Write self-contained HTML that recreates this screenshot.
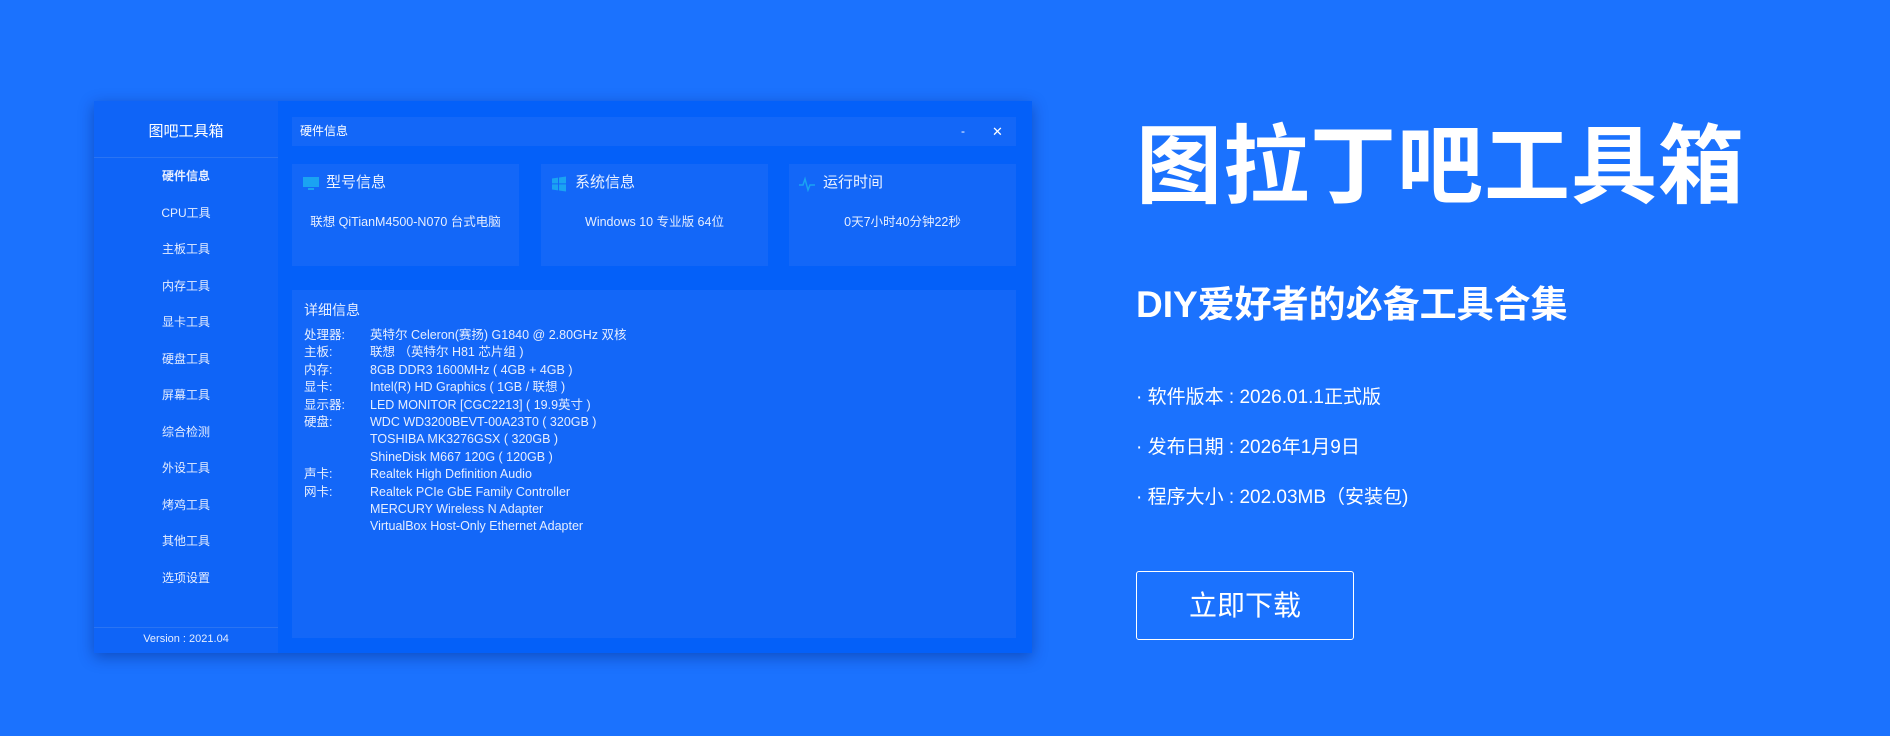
<!DOCTYPE html>
<html><head><meta charset="utf-8"><style>
*{margin:0;padding:0;box-sizing:border-box}
body{width:1890px;height:736px;overflow:hidden;background:#1b72fe;font-family:"Liberation Sans","Noto Sans CJK SC",sans-serif;color:#fff;position:relative}
.a{position:absolute}
.win{left:94px;top:101px;width:938px;height:552px;background:#0460f9;box-shadow:0 4px 14px rgba(0,30,120,.45)}
.side{left:0;top:0;width:184px;height:552px;background:#0f64f7}
.side .t{position:absolute;top:19px;width:184px;text-align:center;font-size:15px}
.side .ln{position:absolute;left:0;width:184px;height:1px;background:#2a74f3}
.menu{position:absolute;left:0;width:184px;text-align:center;font-size:12px;color:#e6eeff}
.bar{left:198px;top:16px;width:724px;height:29px;background:#1367f8;font-size:12px;line-height:29px;padding-left:8px}
.card{top:63px;width:227px;height:102px;background:#1367f8}
.card .h{position:absolute;left:34px;top:7px;font-size:15px;color:#eaf1ff}
.card .v{position:absolute;top:47px;width:100%;text-align:center;font-size:12.5px;color:#e6eeff}
.card svg{position:absolute;left:10px;top:12px}
.det{left:198px;top:189px;width:724px;height:348px;background:#1367f8;font-size:12.5px;color:#e6eeff}
.row{position:absolute;left:12px;height:17.4px;line-height:17.4px;white-space:nowrap}
.row b{font-weight:normal;display:inline-block;width:66px}
.r{left:1136px;white-space:nowrap}
</style></head><body>
<div class="a win">
 <div class="a side">
  <div class="t">图吧工具箱</div>
  <div class="ln" style="top:56px"></div>
  <div class="menu" style="top:66px;font-weight:bold">硬件信息</div>
  <div class="menu" style="top:103px">CPU工具</div>
  <div class="menu" style="top:139px">主板工具</div>
  <div class="menu" style="top:176px">内存工具</div>
  <div class="menu" style="top:212px">显卡工具</div>
  <div class="menu" style="top:249px">硬盘工具</div>
  <div class="menu" style="top:285px">屏幕工具</div>
  <div class="menu" style="top:322px">综合检测</div>
  <div class="menu" style="top:358px">外设工具</div>
  <div class="menu" style="top:395px">烤鸡工具</div>
  <div class="menu" style="top:431px">其他工具</div>
  <div class="menu" style="top:468px">选项设置</div>
  <div class="ln" style="top:526px"></div>
  <div class="menu" style="top:532px;font-size:11px">Version : 2021.04</div>
 </div>
 <div class="a bar">硬件信息<span class="a" style="left:669px;top:0">-</span><span class="a" style="left:700px;top:0;font-size:13px">✕</span></div>
 <div class="a card" style="left:198px">
  <svg width="18" height="16" viewBox="0 0 18 16"><rect x="1" y="1" width="16" height="10" fill="#1aa3f2"/><rect x="6" y="12" width="6" height="2" fill="#1aa3f2"/></svg>
  <div class="h">型号信息</div><div class="v">联想 QiTianM4500-N070 台式电脑</div></div>
 <div class="a card" style="left:447px">
  <svg width="16" height="16" viewBox="0 0 16 16" fill="#1aa3f2"><path d="M1 2.5 7 1.6V7.4H1zM8 1.5 15 .5V7.4H8zM1 8.4H7v6L1 13.5zM8 8.4h7V15.5l-7-1z"/></svg>
  <div class="h">系统信息</div><div class="v">Windows 10 专业版 64位</div></div>
 <div class="a card" style="left:695px">
  <svg width="16" height="16" viewBox="0 0 16 16"><path d="M0 9h4l2-6 3 11 2-5h5" fill="none" stroke="#1aa3f2" stroke-width="1.5"/></svg>
  <div class="h">运行时间</div><div class="v">0天7小时40分钟22秒</div></div>
 <div class="a det">
  <div class="a" style="left:12px;top:10px;font-size:14px">详细信息</div>
  <div class="row" style="top:37px"><b>处理器:</b>英特尔 Celeron(赛扬) G1840 @ 2.80GHz 双核</div>
  <div class="row" style="top:54.4px"><b>主板:</b>联想 （英特尔 H81 芯片组 )</div>
  <div class="row" style="top:71.8px"><b>内存:</b>8GB DDR3 1600MHz ( 4GB + 4GB )</div>
  <div class="row" style="top:89.2px"><b>显卡:</b>Intel(R) HD Graphics ( 1GB / 联想 )</div>
  <div class="row" style="top:106.6px"><b>显示器:</b>LED MONITOR [CGC2213] ( 19.9英寸 )</div>
  <div class="row" style="top:124px"><b>硬盘:</b>WDC WD3200BEVT-00A23T0 ( 320GB )</div>
  <div class="row" style="top:141.4px"><b></b>TOSHIBA MK3276GSX ( 320GB )</div>
  <div class="row" style="top:158.8px"><b></b>ShineDisk M667 120G ( 120GB )</div>
  <div class="row" style="top:176.2px"><b>声卡:</b>Realtek High Definition Audio</div>
  <div class="row" style="top:193.6px"><b>网卡:</b>Realtek PCIe GbE Family Controller</div>
  <div class="row" style="top:211px"><b></b>MERCURY Wireless N Adapter</div>
  <div class="row" style="top:228.4px"><b></b>VirtualBox Host-Only Ethernet Adapter</div>
 </div>
</div>
<div class="a r" style="top:112px;font-size:86px;font-weight:bold;letter-spacing:1px;line-height:110px">图拉丁吧工具箱</div>
<div class="a r" style="top:281px;font-size:37px;font-weight:bold;line-height:48px">DIY爱好者的必备工具合集</div>
<div class="a r" style="top:384px;font-size:19px;line-height:28px">· 软件版本 : 2026.01.1正式版</div>
<div class="a r" style="top:434px;font-size:19px;line-height:28px">· 发布日期 : 2026年1月9日</div>
<div class="a r" style="top:484px;font-size:19px;line-height:28px">· 程序大小 : 202.03MB（安装包)</div>
<div class="a r" style="top:571px;width:218px;height:69px;border:1px solid #fff;border-radius:3px;text-align:center;line-height:67px;font-size:28px">立即下载</div>
</body></html>
